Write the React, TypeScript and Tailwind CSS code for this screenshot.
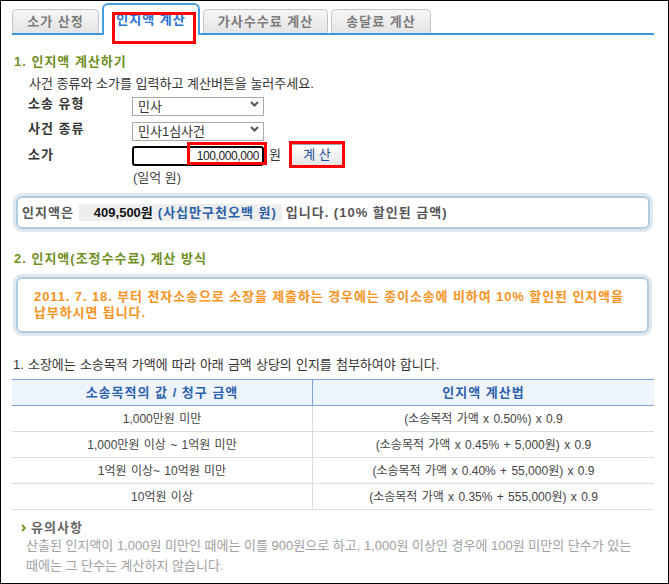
import React from "react";

const tabs = [
  { label: "소가 산정", w: "w-[87px]" },
  { label: "인지액 계산", w: "w-[98px]", active: true },
  { label: "가사수수료 계산", w: "w-[125px]" },
  { label: "송달료 계산", w: "w-[100px]" },
];

const rows = [
  ["1,000만원 미만", "(소송목적 가액 x 0.50%) x 0.9"],
  ["1,000만원 이상 ~ 1억원 미만", "(소송목적 가액 x 0.45% + 5,000원) x 0.9"],
  ["1억원 이상~ 10억원 미만", "(소송목적 가액 x 0.40% + 55,000원) x 0.9"],
  ["10억원 이상", "(소송목적 가액 x 0.35% + 555,000원) x 0.9"],
];

function Chevron() {
  return (
    <svg width="9" height="6" viewBox="0 0 9 6" className="absolute right-[5px] top-[7px]">
      <polyline points="1,1 4.5,4.5 8,1" fill="none" stroke="#555" strokeWidth="2" />
    </svg>
  );
}

function SelectBox({ value }: { value: string }) {
  return (
    <div className="relative w-[132px] h-[19px]">
      <select
        defaultValue={value}
        className="appearance-none w-full h-full border border-[#a9a9a9] bg-white pl-[5px] text-[13px] leading-[17px] text-[#333] outline-none"
      >
        <option>{value}</option>
      </select>
      <Chevron />
    </div>
  );
}

export default function App() {
  return (
    <div className="w-[669px] h-[584px] border border-black bg-white font-['Liberation_Sans','Noto_Sans_CJK_KR',sans-serif] text-[#333]">
      <div className="pl-[11px] w-[653px]">
        {/* 탭 */}
        <div className="flex items-end gap-[3px] pt-[2px] border-b-2 border-[#3d96e0] w-[642px]">
          {tabs.map((t) =>
            t.active ? (
              <div
                key={t.label}
                className={`relative ${t.w} h-[32px] -mb-[2px] rounded-t-[6px] border-2 border-b-0 border-[#4a9de0] bg-white flex items-center justify-center text-[13px] font-bold tracking-[1px] text-[#2a72d4]`}
              >
                {t.label}
                <div className="absolute left-[8px] top-[7px] w-[84px] h-[32px] border-[3px] border-[#ff0000]" />
              </div>
            ) : (
              <div
                key={t.label}
                className={`${t.w} h-[24px] rounded-t-[5px] border border-b-0 border-[#c4c4c4] bg-gradient-to-b from-[#f6f6f6] to-[#e4e4e4] flex items-center justify-center text-[13px] font-bold tracking-[1px] text-[#7c7c7c]`}
              >
                {t.label}
              </div>
            )
          )}
        </div>

        {/* 1. 인지액 계산하기 */}
        <div className="mt-[19px] ml-[2px] h-[16px] leading-[16px] text-[13px] font-bold tracking-[1px] text-[#6f8f1f]">
          1. 인지액 계산하기
        </div>
        <div className="mt-[6px] ml-[17px] h-[16px] leading-[16px] text-[13px] text-[#333]">
          사건 종류와 소가를 입력하고 계산버튼을 눌러주세요.
        </div>

        <div className="mt-[2px] ml-[16px] flex flex-col">
          <div className="flex items-center h-[19px]">
            <div className="w-[104px] text-[13px] font-bold tracking-[1px] text-[#333]">소송 유형</div>
            <SelectBox value="민사" />
          </div>
          <div className="flex items-center h-[19px] mt-[6px]">
            <div className="w-[104px] text-[13px] font-bold tracking-[1px] text-[#333]">사건 종류</div>
            <SelectBox value="민사1심사건" />
          </div>
          <div className="flex items-center h-[23px] mt-[5px]">
            <div className="w-[104px] text-[13px] font-bold tracking-[1px] text-[#333]">소가</div>
            <div className="relative">
              <input
                readOnly
                value="100,000,000"
                className="w-[132px] h-[20px] border-2 border-black rounded-[3px] text-right pr-[3px] text-[12px] tracking-[-0.4px] text-[#222] outline-none"
              />
              <div className="absolute left-[55px] -top-[1px] w-[80px] h-[23px] border-[3px] border-[#ff0000]" />
            </div>
            <span className="ml-[5px] text-[13px] text-[#333]">원</span>
            <div className="relative ml-[9px]">
              <button className="w-[54px] h-[23px] border border-[#9aa6b4] rounded-[2px] bg-gradient-to-b from-white to-[#e4e4e4] text-[13px] text-[#1c4f9e]">
                계 산
              </button>
              <div className="absolute -left-[1px] -top-[1px] w-[56px] h-[27px] border-[3px] border-[#ff0000]" />
            </div>
          </div>
        </div>
        <div className="mt-[4px] ml-[121px] h-[16px] leading-[16px] text-[13px] text-[#444]">(일억 원)</div>

        {/* 결과 */}
        <div className="mt-[10px] ml-[4px] w-[634px] h-[33px] rounded-[6px] border-2 border-[#b0cbe0] shadow-[0_0_0_3px_#dfe7ef] flex items-center pl-[4px] text-[13px] font-bold tracking-[1px] text-[#555]">
          <span>인지액은</span>
          <span className="ml-[5px] h-[17px] flex items-center bg-[#eeeeee] pl-[15px] pr-[5px]">
            <span className="text-[#111] tracking-[0px]">409,500원</span>
            <span className="ml-[5px] text-[#2b5fa8]">(사십만구천오백 원)</span>
          </span>
          <span className="ml-[4px]">입니다. (10% 할인된 금액)</span>
        </div>

        {/* 2. 계산 방식 */}
        <div className="mt-[22px] ml-[2px] h-[16px] leading-[16px] text-[13px] font-bold tracking-[1px] text-[#6f8f1f]">
          2. 인지액(조정수수료) 계산 방식
        </div>
        <div className="mt-[10px] ml-[4px] w-[633px] h-[56px] rounded-[6px] border-2 border-[#b0cbe0] shadow-[0_0_0_3px_#dfe7ef] py-[10px] pl-[16px] text-[13px] leading-[16px] font-bold tracking-[0.9px] text-[#f7931e]">
          <div className="whitespace-nowrap">2011. 7. 18. 부터 전자소송으로 소장을 제출하는 경우에는 종이소송에 비하여 10% 할인된 인지액을</div>
          <div>납부하시면 됩니다.</div>
        </div>

        <div className="mt-[24px] ml-[1px] h-[16px] leading-[16px] text-[13px] [word-spacing:0.5px] text-[#333]">
          1. 소장에는 소송목적 가액에 따라 아래 금액 상당의 인지를 첨부하여야 합니다.
        </div>

        {/* 표 */}
        <div className="mt-[6px] w-[642px]">
          <div className="grid grid-cols-[301px_341px] h-[27px] border-y border-[#7ea7d8] bg-[#eef4fc] text-[13px] font-bold tracking-[1px] text-[#2d62ad]">
            <div className="flex items-center justify-center border-r border-[#7ea7d8]">소송목적의 값 / 청구 금액</div>
            <div className="flex items-center justify-center">인지액 계산법</div>
          </div>
          {rows.map(([a, b]) => (
            <div key={a} className="grid grid-cols-[301px_341px] h-[26px] border-b border-[#dcdcdc] text-[12px] [word-spacing:1px] text-[#444]">
              <div className="flex items-center justify-center border-r border-[#dcdcdc]">{a}</div>
              <div className="flex items-center justify-center">{b}</div>
            </div>
          ))}
        </div>

        {/* 유의사항 */}
        <div className="mt-[10px] ml-[9px] h-[16px] flex items-center gap-[5px]">
          <svg width="5" height="8" viewBox="0 0 5 8">
            <polyline points="1,1 4,4 1,7" fill="none" stroke="#6c9a1f" strokeWidth="1.8" />
          </svg>
          <span className="text-[13px] font-bold tracking-[1px] text-[#666]">유의사항</span>
        </div>
        <div className="ml-[14px] text-[13px] leading-[20px] text-[#a0a0a0]">
          <div className="whitespace-nowrap">산출된 인지액이 1,000원 미만인 때에는 이를 900원으로 하고, 1,000원 이상인 경우에 100원 미만의 단수가 있는</div>
          <div>때에는 그 단수는 계산하지 않습니다.</div>
        </div>
      </div>
    </div>
  );
}
